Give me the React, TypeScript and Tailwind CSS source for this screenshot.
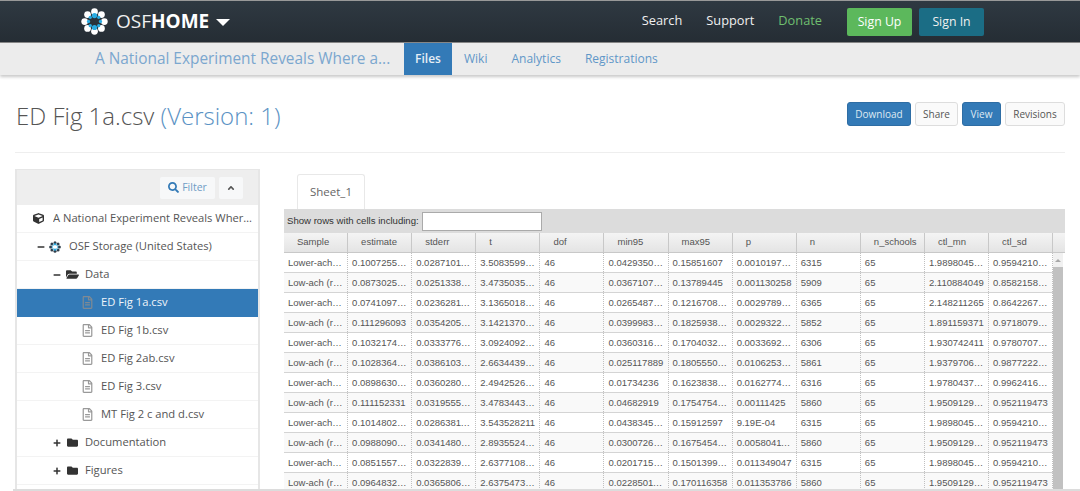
import React from "react";
import { FaCube, FaFolder, FaFolderOpen, FaRegFileAlt, FaSearch, FaPlus, FaMinus, FaAngleUp } from "react-icons/fa";

const cols = ["Sample", "estimate", "stderr", "t", "dof", "min95", "max95", "p", "n", "n_schools", "ctl_mn", "ctl_sd"];
const estimate = ["0.1007255", "0.0873025", "0.0741097", "0.111296093", "0.1032174", "0.1028364", "0.0898630", "0.111152331", "0.1014802", "0.0988090", "0.0851557", "0.0964832"];
const stderr = ["0.0287101", "0.0251338", "0.0236281", "0.0354205", "0.0333776", "0.0386103", "0.0360280", "0.0319555", "0.0286381", "0.0341480", "0.0322839", "0.0365806"];
const tv = ["3.5083599", "3.4735035", "3.1365018", "3.1421370", "3.0924092", "2.6634439", "2.4942526", "3.4783443", "3.543528211", "2.8935524", "2.6377108", "2.6375473"];
const min95 = ["0.0429350", "0.0367107", "0.0265487", "0.0399983", "0.0360316", "0.025117889", "0.01734236", "0.04682919", "0.0438345", "0.0300726", "0.0201715", "0.0228501"];
const max95 = ["0.15851607", "0.13789445", "0.1216708", "0.1825938", "0.1704032", "0.1805550", "0.1623838", "0.1754754", "0.15912597", "0.1675454", "0.1501399", "0.170116358"];
const pv = ["0.0010197", "0.001130258", "0.0029789", "0.0029322", "0.0033692", "0.0106253", "0.0162774", "0.00111425", "9.19E-04", "0.0058041", "0.011349047", "0.011353786"];
const nv = ["6315", "5909", "6365", "5852", "6306", "5861", "6316", "5860", "6315", "5860", "6315", "5860"];
const mn = ["1.9898045", "2.110884049", "2.148211265", "1.891159371", "1.930742411", "1.9379706", "1.9780437", "1.9509129", "1.9898045", "1.9509129", "1.9898045", "1.9509129"];
const sd = ["0.9594210", "0.8582158", "0.8642267", "0.9718079", "0.9780707", "0.9877222", "0.9962416", "0.952119473", "0.9594210", "0.952119473", "0.9594210", "0.952119473"];

const rows = estimate.map((_, i) => [
  i % 2 === 0 ? "Lower-achieving" : "Low-ach (ref group)",
  estimate[i], stderr[i], tv[i], "46", min95[i], max95[i], pv[i], nv[i], "65", mn[i], sd[i],
]);
const show = (v: string) => (v.length === 9 && v[1] === "." ? v + "123" : v);

function Logo({ size, dark }: { size: number; dark?: boolean }) {
  const outer = dark ? "#2f3d4a" : "#ffffff";
  const pts = Array.from({ length: 8 }, (_, i) => {
    const a = (i * Math.PI) / 4;
    return [Math.cos(a), Math.sin(a)];
  });
  return (
    <svg width={size} height={size} viewBox="0 0 28 28" className="shrink-0">
      {pts.map(([x, y], i) => (
        <circle key={i} cx={14 + x * 10.2} cy={14 + y * 10.2} r="3.5" fill={outer} />
      ))}
      {pts.map(([x, y], i) => (
        <circle
          key={i}
          cx={14 + x * 6.2}
          cy={14 + y * 6.2}
          r={i === 2 || i === 6 ? 2.7 : 1.7}
          fill="#29abe2"
        />
      ))}
    </svg>
  );
}

function TreeRow({ pl, active, children }: { pl: string; active?: boolean; children: React.ReactNode }) {
  return (
    <div className={`h-7 flex items-center border-b ${pl} ${active ? "bg-[#337ab7] text-[#f0f5fa] border-[#337ab7]" : "text-[#555] border-[#f3f3f3]"}`}>
      {children}
    </div>
  );
}

function FileRow({ name, active }: { name: string; active?: boolean }) {
  return (
    <TreeRow pl="pl-[65px]" active={active}>
      <FaRegFileAlt className={`text-[13px] w-[11px] mr-[8px] ${active ? "text-[#7f8a94]" : "text-[#999]"}`} />
      <span>{name}</span>
    </TreeRow>
  );
}

export default function App() {
  return (
    <div className="h-[491px] w-[1080px] overflow-hidden bg-white font-['Open_Sans','Liberation_Sans',sans-serif] flex flex-col">
      <header className="h-[43px] shrink-0 bg-gradient-to-b from-[#2f3942] to-[#252d34] border-t border-t-[#999] border-b border-b-[#888] flex items-center pl-[81px] pr-[96px]">
        <Logo size={27} />
        <span className="ml-[8px] text-[19px] text-[#f0f0f0] leading-none">OSF</span>
        <span className="text-[19px] font-bold text-white leading-none">HOME</span>
        <span className="ml-[7px] mt-[2px] w-0 h-0 border-l-[7px] border-r-[7px] border-t-[7px] border-l-transparent border-r-transparent border-t-white" />
        <nav className="ml-auto flex items-center text-[12.8px]">
          <span className="text-[#f0f0f0] mr-[24px] -mt-[1px]">Search</span>
          <span className="text-[#f0f0f0] mr-[24px] -mt-[1px]">Support</span>
          <span className="text-[#6fbf6f] mr-[25px] -mt-[1px]">Donate</span>
          <span className="mt-[1px] w-[65px] h-[28px] flex items-center justify-center rounded-[2px] bg-[#5cb85c] text-white text-[12.3px]">Sign Up</span>
          <span className="mt-[1px] ml-[7px] w-[65px] h-[28px] flex items-center justify-center rounded-[2px] bg-[#1b6d85] text-[#f0f0f0] text-[12.3px]">Sign In</span>
        </nav>
      </header>
      <div className="h-[32px] shrink-0 bg-[#ececec] shadow-[0_2px_3px_rgba(0,0,0,0.22)] flex items-stretch pl-[95px] z-10">
        <span className="w-[309px] text-[15.4px] pb-[1px] flex items-center text-[#7ba7cf] whitespace-nowrap overflow-hidden">A National Experiment Reveals Where a...</span>
        <span className="w-[48px] bg-[#337ab7] text-[#e6eef5] font-semibold text-[12px] flex items-center justify-center">Files</span>
        <span className="text-[12px] text-[#5f97c8] flex items-center ml-[12px]">Wiki</span>
        <span className="text-[12px] text-[#5f97c8] flex items-center ml-[24px]">Analytics</span>
        <span className="text-[12px] text-[#5f97c8] flex items-center ml-[24px]">Registrations</span>
      </div>
      <div className="mt-[28px] mx-[15px] h-[50px] shrink-0 flex items-start border-b border-[#eee]">
        <h1 className="text-[24px] ml-[1px] font-light text-[#555] leading-[26px] whitespace-nowrap">
          ED Fig 1a.csv <span className="text-[#5a92c4]">(Version: 1)</span>
        </h1>
        <div className="ml-auto -mt-[1px] flex gap-[4px] text-[10px] h-[24px]">
          <span className="w-[64px] flex items-center justify-center rounded-[3px] bg-[#337ab7] border border-[#2e6da4] text-[#dfe9f2]">Download</span>
          <span className="w-[43px] flex items-center justify-center rounded-[3px] bg-[#fafafa] border border-[#ddd] text-[#555]">Share</span>
          <span className="w-[39px] flex items-center justify-center rounded-[3px] bg-[#337ab7] border border-[#2e6da4] text-[#dfe9f2]">View</span>
          <span className="w-[60px] flex items-center justify-center rounded-[3px] bg-[#fafafa] border border-[#ddd] text-[#555]">Revisions</span>
        </div>
      </div>
      <main className="mt-[16px] flex items-start flex-1 min-h-0 relative">
        <aside className="ml-[15px] w-[245px] h-[320px] shrink-0 border-t border-[#e6e6e6] border-x-2 text-[11.2px]">
          <div className="h-[35px] bg-[#eee] flex items-center justify-end pr-[15px] gap-[4px]">
            <span className="w-[55px] h-[22px] bg-[#f7f8f9] rounded-[2px] flex items-center justify-center text-[10.5px] text-[#6f9cc5]">
              <FaSearch className="text-[#337ab7] text-[11px] mr-[3px]" />Filter
            </span>
            <span className="w-[24px] h-[22px] bg-[#f7f8f9] rounded-[2px] flex items-center justify-center text-[#555]">
              <FaAngleUp className="text-[10px]" />
            </span>
          </div>
          <TreeRow pl="pl-[16px]">
            <FaCube className="text-[11px] text-[#333] mr-[9px] shrink-0" />
            <span className="truncate pr-[5px]">A National Experiment Reveals Where a Growth</span>
          </TreeRow>
          <TreeRow pl="pl-[20px]">
            <FaMinus className="text-[8px] text-[#333] mr-[4px]" />
            <Logo size={12} dark />
            <span className="ml-[8px] whitespace-nowrap">OSF Storage (United States)</span>
          </TreeRow>
          <TreeRow pl="pl-[36px]">
            <FaMinus className="text-[8px] text-[#333] mr-[5px]" />
            <FaFolderOpen className="text-[13px] text-[#333] mr-[6px]" />
            <span>Data</span>
          </TreeRow>
          <FileRow name="ED Fig 1a.csv" active />
          <FileRow name="ED Fig 1b.csv" />
          <FileRow name="ED Fig 2ab.csv" />
          <FileRow name="ED Fig 3.csv" />
          <FileRow name="MT Fig 2 c and d.csv" />
          <TreeRow pl="pl-[36px]">
            <FaPlus className="text-[8px] text-[#333] mr-[6px]" />
            <FaFolder className="text-[11px] text-[#333] mr-[7px]" />
            <span>Documentation</span>
          </TreeRow>
          <TreeRow pl="pl-[36px]">
            <FaPlus className="text-[8px] text-[#333] mr-[6px]" />
            <FaFolder className="text-[11px] text-[#333] mr-[7px]" />
            <span>Figures</span>
          </TreeRow>
        </aside>
        <section className="ml-[24px] w-[781px] flex flex-col">
          <div className="h-[40px] pt-[5px] pl-[13px] flex">
            <span className="w-[68px] h-[35px] border border-b-0 border-[#e8e8e8] rounded-t-[3px] flex items-center justify-center text-[11.5px] text-[#666] bg-white">Sheet_1</span>
          </div>
          <div className="h-[24px] bg-[#dcdcdc] flex items-center pl-[3px] font-['Liberation_Sans',sans-serif] text-[9.6px] text-[#333]">
            <span className="whitespace-nowrap">Show rows with cells including:</span>
            <span className="ml-[3px] w-[120px] h-[19px] bg-white border border-[#aaa]" />
          </div>
          <div className="relative font-['Liberation_Sans',sans-serif] text-[9.5px] text-[#555]">
            <div className="grid grid-cols-[repeat(12,64.1px)_1fr] h-[20px] border-b border-[#c8c8c8] bg-gradient-to-b from-[#f4f4f4] to-[#e4e4e4]">
              {cols.map((c) => (
                <div key={c} className="pl-[13px] flex items-center border-r border-[#c8c8c8]">{c}</div>
              ))}
              <div />
            </div>
            {rows.map((r, i) => (
              <div key={i} className={`grid grid-cols-[repeat(12,64.1px)] h-[20px] border-b border-[#d4d4d4] w-[769px] ${i % 2 ? "bg-[#f9f9f9]" : "bg-white"}`}>
                {r.map((v, j) => (
                  <div key={j} className={`pl-[4px] leading-[20px] truncate border-r border-dotted border-[#c0c0c0] ${j === 0 && i % 2 === 0 ? "pr-[5px]" : "pr-[2px]"}`}>{show(v)}</div>
                ))}
              </div>
            ))}
            <div className="absolute right-[2px] top-[20px] bottom-0 w-[10px] bg-[#f1f1f1] flex flex-col items-center">
              <span className="mt-[6px] w-0 h-0 border-l-[3px] border-r-[3px] border-b-[3px] border-l-transparent border-r-transparent border-b-[#a8a8a8]" />
              <span className="mt-[5px] flex-1 w-full bg-[#c1c1c1]" />
            </div>
          </div>
        </section>
        <div className="absolute left-[13px] right-0 top-[320px] h-[2px] bg-[#dcdcdc]" />
      </main>
    </div>
  );
}
